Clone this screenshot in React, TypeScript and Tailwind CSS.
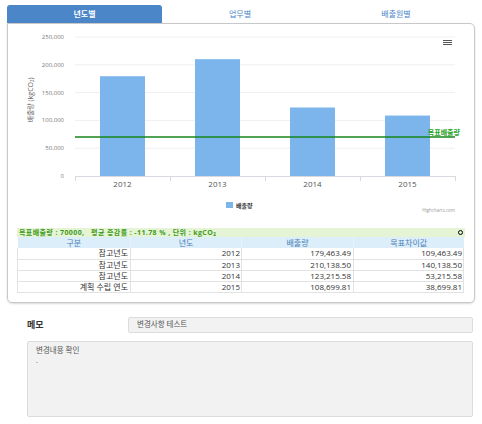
import React from 'react'

const rows = [
  { kind: '참고년도', year: '2012', amount: '179,463.49', diff: '109,463.49' },
  { kind: '참고년도', year: '2013', amount: '210,138.50', diff: '140,138.50' },
  { kind: '참고년도', year: '2014', amount: '123,215.58', diff: '53,215.58' },
  { kind: '계획 수립 연도', year: '2015', amount: '108,699.81', diff: '38,699.81' },
]

const bars = [
  { year: '2012', value: 179463 },
  { year: '2013', value: 210138 },
  { year: '2014', value: 123215 },
  { year: '2015', value: 108699 },
]

const FONT = '"Open Sans", "Noto Sans CJK KR", sans-serif'

function Chart() {
  const y0 = 176
  const scale = 139 / 250000
  const ticks = [0, 50000, 100000, 150000, 200000, 250000]
  return (
    <svg width={466} height={200} viewBox="8 24 466 200" className="block">
      {ticks.map((t) => {
        const y = y0 - t * scale
        return (
          <g key={t}>
            {t > 0 && <line x1={75} x2={455} y1={y} y2={y} stroke="#f0f0f0" strokeWidth={1} />}
            <text x={64} y={y + 2} textAnchor="end" fontSize={6} fill="#777" fontFamily={FONT}>
              {t === 0 ? '0' : t.toLocaleString('en-US')}
            </text>
          </g>
        )
      })}
      <text
        transform="translate(33 100) rotate(-90)"
        textAnchor="middle"
        fontSize={7}
        fill="#666"
        fontFamily={FONT}
      >
        배출량 (kgCO₂)
      </text>
      {bars.map((b, i) => {
        const cx = 122.5 + i * 95
        const h = b.value * scale
        return (
          <g key={b.year}>
            <rect x={cx - 22.5} y={y0 - h} width={45} height={h} fill="#7cb5ec" />
            <text x={cx} y={187} textAnchor="middle" fontSize={8} fill="#555" fontFamily={FONT}>
              {b.year}
            </text>
          </g>
        )
      })}
      <line x1={75} x2={455} y1={176.5} y2={176.5} stroke="#d8d8e0" strokeWidth={1} />
      {[75, 170, 265, 360, 455].map((x) => (
        <line key={x} x1={x + 0.5} x2={x + 0.5} y1={176} y2={181} stroke="#d8d8e0" strokeWidth={1} />
      ))}
      <line x1={75} x2={455} y1={137} y2={137} stroke="#16861a" strokeWidth={1.5} />
      <text x={460} y={135} textAnchor="end" fontSize={7} fontWeight={700} fill="#27a327" fontFamily={FONT}>
        목표배출량
      </text>
      <g stroke="#555" strokeWidth={1}>
        <line x1={443} x2={452} y1={40.5} y2={40.5} />
        <line x1={443} x2={452} y1={42.5} y2={42.5} />
        <line x1={443} x2={452} y1={44.5} y2={44.5} />
      </g>
      <rect x={226} y={202} width={7} height={6} fill="#7cb5ec" />
      <text x={236} y={207.5} fontSize={6} fontWeight={700} fill="#333" fontFamily={FONT}>
        배출량
      </text>
      <text x={455} y={212} textAnchor="end" fontSize={4.5} fill="#999" fontFamily={FONT}>
        Highcharts.com
      </text>
    </svg>
  )
}

export default function App() {
  return (
    <div
      className="w-[482px] h-[424px] bg-white overflow-hidden"
      style={{ fontFamily: FONT }}
    >
      {/* Tabs */}
      <div className="flex px-[7px] pt-[5px]">
        <div className="w-[155px] h-[18px] bg-[#4a86c8] rounded-t-[3px] flex items-center justify-center text-[8px] font-bold text-white">
          년도별
        </div>
        <div className="w-[156px] h-[18px] flex items-center justify-center text-[8px] text-[#4a86c8]">
          업무별
        </div>
        <div className="w-[156px] h-[18px] flex items-center justify-center text-[8px] text-[#4a86c8]">
          배출원별
        </div>
      </div>

      {/* Panel */}
      <div className="mx-[7px] h-[280px] border border-[#c8c8c8] rounded-b-[5px] rounded-tr-[5px] shadow-[0_1px_2px_rgba(0,0,0,0.15)]">
        <Chart />
        <div className="px-[9px] mt-[4px]">
          <div className="h-[9px] bg-[#e6f4d6] flex items-center justify-between pl-[2px] pr-[2px]">
            <span className="text-[7px] font-bold text-[#3f9a22] leading-none tracking-[0.4px] whitespace-pre">
              목표배출량 : 70000,   평균 증감률 : -11.78 % , 단위 : kgCO₂
            </span>
            <span className="w-[5px] h-[5px] rounded-full border-[1.5px] border-black"></span>
          </div>
          <table className="w-[446px] border-collapse table-fixed text-[8px] leading-none">
            <colgroup>
              <col className="w-[113px]" />
              <col className="w-[111px]" />
              <col className="w-[112px]" />
              <col className="w-[110px]" />
            </colgroup>
            <thead>
              <tr className="h-[11px] bg-[#dbeef9] text-[#4c7fb8]">
                <th className="font-normal border-r border-[#e8f2f8]">구분</th>
                <th className="font-normal border-r border-[#e8f2f8]">년도</th>
                <th className="font-normal border-r border-[#e8f2f8]">배출량</th>
                <th className="font-normal">목표차이값</th>
              </tr>
            </thead>
            <tbody className="text-[#333]">
              {rows.map((r) => (
                <tr key={r.year} className="h-[11px] border-b border-[#e2e2e2]">
                  <td className="text-right pr-[2px] border-r border-l border-[#e2e2e2]">{r.kind}</td>
                  <td className="text-right pr-[1px] border-r border-[#e2e2e2]">{r.year}</td>
                  <td className="text-right pr-[2px] border-r border-[#e2e2e2]">{r.amount}</td>
                  <td className="text-right pr-[1px] border-r border-[#e2e2e2]">{r.diff}</td>
                </tr>
              ))}
            </tbody>
          </table>
        </div>
      </div>

      {/* Memo */}
      <div className="flex items-center mt-[14px] pl-[27px] pr-[9px]">
        <div className="w-[101px] text-[9px] font-bold text-[#333]">메모</div>
        <div className="flex-1 h-[16px] bg-[#f2f2f2] border border-[#dcdcdc] rounded-[2px] flex items-center pl-[8px] text-[7.5px] text-[#555]">
          변경사항 테스트
        </div>
      </div>
      <div className="ml-[27px] mr-[9px] mt-[8px] h-[76px] bg-[#f2f2f2] border border-[#dcdcdc] rounded-[2px] px-[8px] py-[3px] text-[7.5px] text-[#555] leading-[10px]">
        <div>변경내용 확인</div>
        <div>.</div>
      </div>
    </div>
  )
}
